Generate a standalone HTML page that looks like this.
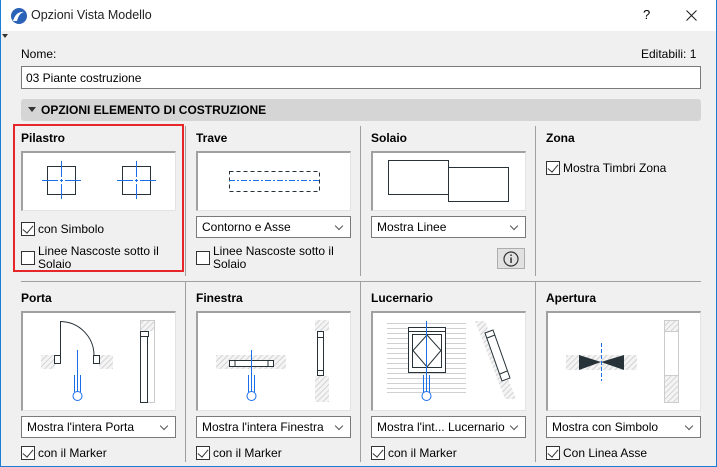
<!DOCTYPE html>
<html><head><meta charset="utf-8"><style>
*{margin:0;padding:0;box-sizing:border-box}
body{width:717px;height:467px;overflow:hidden;background:#f0f0f0;font-family:"Liberation Sans",sans-serif;font-size:12px;color:#000;position:relative}
.a{position:absolute}
.tb{left:0;top:0;width:717px;height:31px;background:#fff}
.bd{left:0;top:0;width:717px;height:467px;border:1px solid #1a7fd4;border-top:none;pointer-events:none}
.h{font-weight:bold;font-size:12px}
.pv{background:#fff;border:1px solid #e3e3e3;border-top:2px solid #a0a0a0;border-left:2px solid #a0a0a0}
.dd{background:#fff;border:1px solid #7a7a7a;height:22px;padding:3px 0 0 5px;white-space:nowrap}
.dd:after{content:"";position:absolute;right:8px;top:6px;width:5px;height:5px;border-right:1px solid #555;border-bottom:1px solid #555;transform:rotate(45deg)}
.cb{width:14px;height:14px;background:#fff;border:1px solid #333}
.ck:after{content:"";position:absolute;left:3px;top:0px;width:5px;height:9px;border-right:1.5px solid #333;border-bottom:1.5px solid #333;transform:rotate(40deg)}
.vs{width:1px;background:#a0a0a0}
</style></head><body>
<div class="a tb"></div>
<svg class="a" style="left:10px;top:7px" width="18" height="18"><circle cx="9" cy="9" r="8" fill="#2a62b8"/><path d="M3 14 Q6 4 14 5 Q9 6 7 14Z" fill="#fff"/></svg>
<div class="a" style="left:31px;top:8px;font-size:12.5px;color:#222">Opzioni Vista Modello</div>
<div class="a" style="left:643px;top:7px;font-size:13px">?</div>
<svg class="a" style="left:686px;top:10px" width="11" height="11"><path d="M0.5 0.5L10.5 10.5M10.5 0.5L0.5 10.5" stroke="#222" stroke-width="1.1"/></svg>
<svg class="a" style="left:2px;top:34px" width="6" height="5"><path d="M0 0H6L3 4Z" fill="#333"/></svg>
<div class="a" style="left:21px;top:47px">Nome:</div>
<div class="a" style="left:641px;top:47px">Editabili: 1</div>
<div class="a" style="left:21px;top:66px;width:680px;height:23px;background:#fff;border:1px solid #7a7a7a;padding:4px 0 0 4px">03 Piante costruzione</div>
<div class="a" style="left:21px;top:99px;width:680px;height:22px;background:#d5d5d5;border-radius:3px;padding:4px 0 0 20px;font-weight:bold">OPZIONI ELEMENTO DI COSTRUZIONE</div>
<svg class="a" style="left:28px;top:107px" width="8" height="5"><path d="M0 0H8L4 5Z" fill="#333"/></svg>

<div class="a vs" style="left:185px;top:126px;height:150px"></div>
<div class="a vs" style="left:360px;top:126px;height:150px"></div>
<div class="a vs" style="left:535px;top:126px;height:150px"></div>
<div class="a" style="left:21px;top:281px;width:680px;height:1px;background:#a0a0a0"></div>
<div class="a vs" style="left:185px;top:282px;height:180px"></div>
<div class="a vs" style="left:360px;top:282px;height:180px"></div>
<div class="a vs" style="left:535px;top:282px;height:180px"></div>

<!-- row 1 -->
<div class="a" style="left:13px;top:124px;width:171px;height:148px;border:2px solid #e8262a"></div>
<div class="a h" style="left:21px;top:131px">Pilastro</div>
<div class="a h" style="left:196px;top:131px">Trave</div>
<div class="a h" style="left:371px;top:131px">Solaio</div>
<div class="a h" style="left:546px;top:131px">Zona</div>
<div class="a pv" style="left:21px;top:151px;width:155px;height:60px"></div>
<div class="a pv" style="left:196px;top:151px;width:155px;height:60px"></div>
<div class="a pv" style="left:371px;top:151px;width:155px;height:60px"></div>
<svg class="a" style="left:0;top:0" width="717" height="467">
<g fill="none" stroke="#263238" stroke-width="1">
<rect x="47.5" y="166.5" width="28" height="28"/><rect x="122.5" y="166.5" width="28" height="28"/>
<rect x="229.5" y="171.5" width="90" height="20" stroke-dasharray="4 3"/>
<rect x="388.5" y="160.5" width="60" height="34"/><rect x="448.5" y="167.5" width="60" height="34"/>
</g>
<g stroke="#1a6ee8" stroke-width="1" fill="none">
<path d="M42 180.5H58M60 180.5H63M65 180.5H81M61.5 161V177M61.5 179V182M61.5 184V199M117 180.5H133M135 180.5H138M140 180.5H156M136.5 161V177M136.5 179V182M136.5 184V199"/>
<path d="M229 180.5H319" stroke-dasharray="6 2 2 2"/>
</g>
</svg>
<div class="a cb ck" style="left:21px;top:222px"></div><div class="a" style="left:38px;top:222px">con Simbolo</div>
<div class="a cb" style="left:21px;top:251px"></div><div class="a" style="left:38px;top:245px;line-height:13px">Linee Nascoste sotto il<br>Solaio</div>
<div class="a dd" style="left:196px;top:216px;width:155px">Contorno e Asse</div>
<div class="a cb" style="left:196px;top:251px"></div><div class="a" style="left:213px;top:245px;line-height:13px">Linee Nascoste sotto il<br>Solaio</div>
<div class="a dd" style="left:371px;top:216px;width:155px">Mostra Linee</div>
<div class="a" style="left:497px;top:248px;width:28px;height:21px;background:#e1e1e1;border:1px solid #adadad"></div>
<svg class="a" style="left:502px;top:250px" width="18" height="18"><circle cx="9" cy="9" r="7" fill="none" stroke="#333" stroke-width="1.2"/><rect x="8.3" y="7.5" width="1.5" height="5.5" fill="#333"/><rect x="8.3" y="4.5" width="1.5" height="1.5" fill="#333"/></svg>
<div class="a cb ck" style="left:546px;top:161px"></div><div class="a" style="left:563px;top:161px">Mostra Timbri Zona</div>

<!-- row 2 -->
<div class="a h" style="left:21px;top:291px">Porta</div>
<div class="a h" style="left:196px;top:291px">Finestra</div>
<div class="a h" style="left:371px;top:291px">Lucernario</div>
<div class="a h" style="left:546px;top:291px">Apertura</div>
<div class="a pv" style="left:21px;top:311px;width:155px;height:100px"></div>
<div class="a pv" style="left:196px;top:311px;width:155px;height:100px"></div>
<div class="a pv" style="left:371px;top:311px;width:155px;height:100px"></div>
<div class="a pv" style="left:546px;top:311px;width:155px;height:100px"></div>
<svg class="a" style="left:0;top:0" width="717" height="467">
<defs><pattern id="h2" width="4" height="4" patternUnits="userSpaceOnUse" patternTransform="rotate(45)"><rect width="4" height="4" fill="#f4f4f4"/><line x1="0" y1="0" x2="0" y2="4" stroke="#c8c8c8" stroke-width="1.5"/></pattern></defs>
<rect x="41" y="355" width="14" height="14" fill="url(#h2)"/><rect x="99" y="355" width="14" height="14" fill="url(#h2)"/>
<rect x="140.5" y="320.5" width="14" height="82" fill="none" stroke="#ccc"/>
<rect x="141" y="321" width="13" height="10" fill="url(#h2)"/>
<g fill="#fff" stroke="#263238">
<rect x="54.5" y="355.5" width="6" height="8"/><rect x="93.5" y="355.5" width="6" height="8"/>
<rect x="140.5" y="336.5" width="7" height="66"/><rect x="140.5" y="331.5" width="8" height="5"/>
</g>
<path d="M60.5 355V321.5A34 34 0 0 1 94 355" fill="none" stroke="#263238"/>
<g stroke="#1a6ee8" fill="none"><path d="M77.5 350V375M74.5 375V392M77.5 375V392M80.5 375V392"/><circle cx="77.5" cy="396" r="4.5" fill="#fff"/></g>
<rect x="216" y="355" width="70" height="14" fill="url(#h2)"/>
<rect x="315" y="320" width="14" height="82" fill="url(#h2)"/>
<rect x="315" y="331" width="14" height="45" fill="#fff"/>
<g fill="#fff" stroke="#263238"><rect x="229.5" y="360.5" width="44" height="6"/><path d="M235 360.5V366.5M268 360.5V366.5"/>
<rect x="317.5" y="331.5" width="6" height="44"/><path d="M317.5 337.5H323.5M317.5 370.5H323.5"/></g>
<g stroke="#1a6ee8" fill="none"><path d="M251.5 350V375M248.5 375V392M251.5 375V392M254.5 375V392"/><circle cx="251.5" cy="396" r="4.5" fill="#fff"/></g>
<g stroke="#d0d0d0"><path d="M387 323.5H466M387 328.5H466M387 333.5H466M387 338.5H466M387 343.5H466M387 348.5H466M387 353.5H466M387 358.5H466M387 363.5H466M387 368.5H466M387 373.5H466M387 378.5H466M387 383.5H466M387 388.5H466M387 392.5H466"/></g>
<polygon points="475,321 485,321 516,399 505,399" fill="url(#h2)"/>
<g fill="#fff" stroke="#263238"><rect x="408.5" y="327.5" width="37" height="45"/><path d="M408.5 331.5H445.5"/><rect x="412.5" y="334.5" width="29" height="33"/>
<path d="M427 335L441 350.5L427 367L413 350.5Z"/>
<polygon points="485,333 493,330 510,378 502,381"/><path d="M487 338L495 335M500 374L507 371"/></g>
<g stroke="#1a6ee8" fill="none"><path d="M426.5 321V375M423.5 375V392M426.5 375V392M429.5 375V392"/><circle cx="426.5" cy="396" r="4.5" fill="#fff"/></g>
<rect x="566" y="355" width="71" height="15" fill="url(#h2)"/>
<rect x="664.5" y="320.5" width="14" height="82" fill="#fff" stroke="#ccc"/>
<rect x="665" y="321" width="13" height="10" fill="url(#h2)"/><rect x="665" y="376" width="13" height="26" fill="url(#h2)"/>
<path d="M665 331.5H678M665 375.5H678" stroke="#ccc"/>
<polygon points="579,355 601,362 624,355 624,370 601,362 579,370" fill="#263238"/>
<path d="M601.5 343V381" stroke="#1a6ee8" stroke-dasharray="4 2"/>
</svg>
<div class="a dd" style="left:21px;top:416px;width:155px">Mostra l'intera Porta</div>
<div class="a dd" style="left:196px;top:416px;width:155px">Mostra l'intera Finestra</div>
<div class="a dd" style="left:371px;top:416px;width:155px">Mostra l'int... Lucernario</div>
<div class="a dd" style="left:546px;top:416px;width:155px">Mostra con Simbolo</div>
<div class="a cb ck" style="left:21px;top:446px"></div><div class="a" style="left:38px;top:446px">con il Marker</div>
<div class="a cb ck" style="left:196px;top:446px"></div><div class="a" style="left:213px;top:446px">con il Marker</div>
<div class="a cb ck" style="left:371px;top:446px"></div><div class="a" style="left:388px;top:446px">con il Marker</div>
<div class="a cb ck" style="left:546px;top:446px"></div><div class="a" style="left:563px;top:446px">Con Linea Asse</div>
<div class="a bd"></div>
</body></html>
